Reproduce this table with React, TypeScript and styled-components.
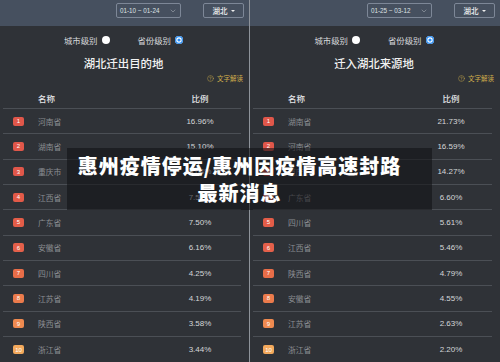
import styled, { createGlobalStyle } from 'styled-components'
import React from 'react'
import { ChevronDown, CircleHelp } from 'lucide-react'

const GlobalStyle = createGlobalStyle`
  body {
    margin: 0;
    background: #2f3237;
    font-family: "Noto Sans CJK SC", "Noto Sans", sans-serif;
  }
`

const Page = styled.div`
  position: relative;
  width: 500px;
  height: 362px;
  overflow: hidden;
  display: grid;
  grid-template-columns: 249px 251px;
  background: #2f3237;
`

const Panel = styled.div<{ $divider?: boolean }>`
  display: flex;
  flex-direction: column;
  border-left: ${p => (p.$divider ? '1px solid #8e939a' : 'none')};
`

const TopBar = styled.div`
  height: 26px;
  background: #46505f;
  display: flex;
  align-items: flex-start;
  justify-content: flex-end;
  padding: 3px 5px 0 0;
  gap: 22px;
  box-sizing: border-box;
`

const DateBox = styled.div`
  width: 65px;
  height: 15px;
  box-sizing: border-box;
  border: 1px solid #7d8797;
  border-radius: 2px;
  display: flex;
  align-items: center;
  justify-content: space-between;
  padding: 0 3px 0 3px;
  color: #dde0e4;
  font-size: 6.3px;
  font-family: "Liberation Sans", sans-serif;
`

const RegionButton = styled.div`
  width: 41px;
  height: 15px;
  box-sizing: border-box;
  border: 1px solid #7d8797;
  border-radius: 2px;
  display: flex;
  align-items: center;
  justify-content: center;
  gap: 3px;
  color: #f0f0f0;
  font-size: 7.5px;
  font-weight: 500;
`

const Caret = styled.span`
  width: 0;
  height: 0;
  border-left: 2px solid transparent;
  border-right: 2px solid transparent;
  border-top: 2.5px solid #eee;
`

const RadioRow = styled.div`
  height: 28px;
  display: flex;
  align-items: center;
  justify-content: center;
  gap: 28px;
  padding-right: 2px;
`

const RadioItem = styled.div`
  display: flex;
  align-items: center;
  gap: 4px;
  color: #d6d8db;
  font-size: 8.4px;
`

const Dot = styled.span<{ $checked?: boolean }>`
  width: 8px;
  height: 8px;
  border-radius: 50%;
  background: ${p => (p.$checked ? '#2f8ef0' : '#ffffff')};
  box-shadow: ${p =>
    p.$checked ? 'inset 0 0 0 1.3px #2f8ef0, inset 0 0 0 2.4px #ffffff' : 'none'};
`

const Title = styled.div`
  height: 18px;
  line-height: 18px;
  text-align: center;
  color: #f2f2f2;
  font-size: 11.4px;
  font-weight: 500;
  padding-right: 2px;
`

const NoteRow = styled.div`
  height: 12px;
  display: flex;
  align-items: center;
  justify-content: flex-end;
  gap: 3px;
  padding-right: 6px;
  color: #cfae4c;
  font-size: 6.5px;
`

const Table = styled.div`
  margin: 0 8px 0 3px;
`

const HeadRow = styled.div`
  height: 25px;
  box-sizing: border-box;
  padding: 4px 16px 0 35px;
  display: flex;
  align-items: center;
  border-bottom: 1px solid #4b4f55;
  color: #e4e5e7;
  font-size: 8.5px;
  font-weight: 500;
`

const Row = styled.div`
  height: 25.33px;
  box-sizing: border-box;
  padding: 0 16px 0 10px;
  display: flex;
  align-items: center;
  border-bottom: 1px solid #4b4f55;
  &:last-child {
    border-bottom: none;
  }
`

const Badge = styled.span<{ $color: string }>`
  width: 11px;
  height: 9px;
  border-radius: 2px;
  background: ${p => p.$color};
  color: #fff;
  font-size: 6px;
  font-family: "Liberation Sans", sans-serif;
  display: flex;
  align-items: center;
  justify-content: center;
  margin-right: 14px;
`

const Name = styled.span`
  flex: 1;
  color: #8b8e93;
  font-size: 7.8px;
`

const HeadName = styled.span`
  flex: 1;
`

const Percent = styled.span`
  width: 50px;
  text-align: center;
  color: #d4d6d8;
  font-size: 8px;
  font-family: "Liberation Sans", sans-serif;
`

const HeadPercent = styled.span`
  width: 50px;
  text-align: center;
`

const Banner = styled.div`
  position: absolute;
  left: 67px;
  top: 148px;
  width: 365px;
  box-sizing: border-box;
  padding: 4px 20px 4px 0;
  background: rgba(18, 18, 20, 0.58);
  color: #ffffff;
  font-size: 20px;
  font-weight: 900;
  line-height: 27px;
  letter-spacing: 1px;
  text-align: center;
  white-space: nowrap;
`

const badgeColors = [
  '#e0574a', '#e0574a', '#e0574a', '#e25a48', '#e35d48', '#e4604a',
  '#e86d48', '#eb7b4c', '#ef8a50', '#f3a95c'
]

type Item = { name: string; value: string }

const panels: { date: string; title: string; rows: Item[] }[] = [
  {
    date: '01-10 ~ 01-24',
    title: '湖北迁出目的地',
    rows: [
      { name: '河南省', value: '16.96%' },
      { name: '湖南省', value: '15.10%' },
      { name: '重庆市', value: '8.64%' },
      { name: '江西省', value: '7.52%' },
      { name: '广东省', value: '7.50%' },
      { name: '安徽省', value: '6.16%' },
      { name: '四川省', value: '4.25%' },
      { name: '江苏省', value: '4.19%' },
      { name: '陕西省', value: '3.58%' },
      { name: '浙江省', value: '3.44%' }
    ]
  },
  {
    date: '01-25 ~ 03-12',
    title: '迁入湖北来源地',
    rows: [
      { name: '湖南省', value: '21.73%' },
      { name: '河南省', value: '16.59%' },
      { name: '重庆市', value: '14.27%' },
      { name: '广东省', value: '6.60%' },
      { name: '四川省', value: '5.61%' },
      { name: '江西省', value: '5.46%' },
      { name: '陕西省', value: '4.79%' },
      { name: '安徽省', value: '4.55%' },
      { name: '江苏省', value: '2.63%' },
      { name: '浙江省', value: '2.20%' }
    ]
  }
]

export default function App() {
  return (
    <>
      <GlobalStyle />
      <Page>
        {panels.map((panel, i) => (
          <Panel key={panel.title} $divider={i === 1}>
            <TopBar>
              <DateBox>
                <span>{panel.date}</span>
                <ChevronDown size={8} strokeWidth={1.2} color='#cfd3d9' />
              </DateBox>
              <RegionButton>
                湖北
                <Caret />
              </RegionButton>
            </TopBar>
            <RadioRow>
              <RadioItem>
                城市级别
                <Dot />
              </RadioItem>
              <RadioItem>
                省份级别
                <Dot $checked />
              </RadioItem>
            </RadioRow>
            <Title>{panel.title}</Title>
            <NoteRow>
              <CircleHelp size={7} strokeWidth={1.5} />
              文字解读
            </NoteRow>
            <Table>
              <HeadRow>
                <HeadName>名称</HeadName>
                <HeadPercent>比例</HeadPercent>
              </HeadRow>
              {panel.rows.map((row, j) => (
                <Row key={row.name}>
                  <Badge $color={badgeColors[j]}>{j + 1}</Badge>
                  <Name>{row.name}</Name>
                  <Percent>{row.value}</Percent>
                </Row>
              ))}
            </Table>
          </Panel>
        ))}
        <Banner>
          惠州疫情停运/惠州因疫情高速封路
          <br />
          最新消息
        </Banner>
      </Page>
    </>
  )
}
